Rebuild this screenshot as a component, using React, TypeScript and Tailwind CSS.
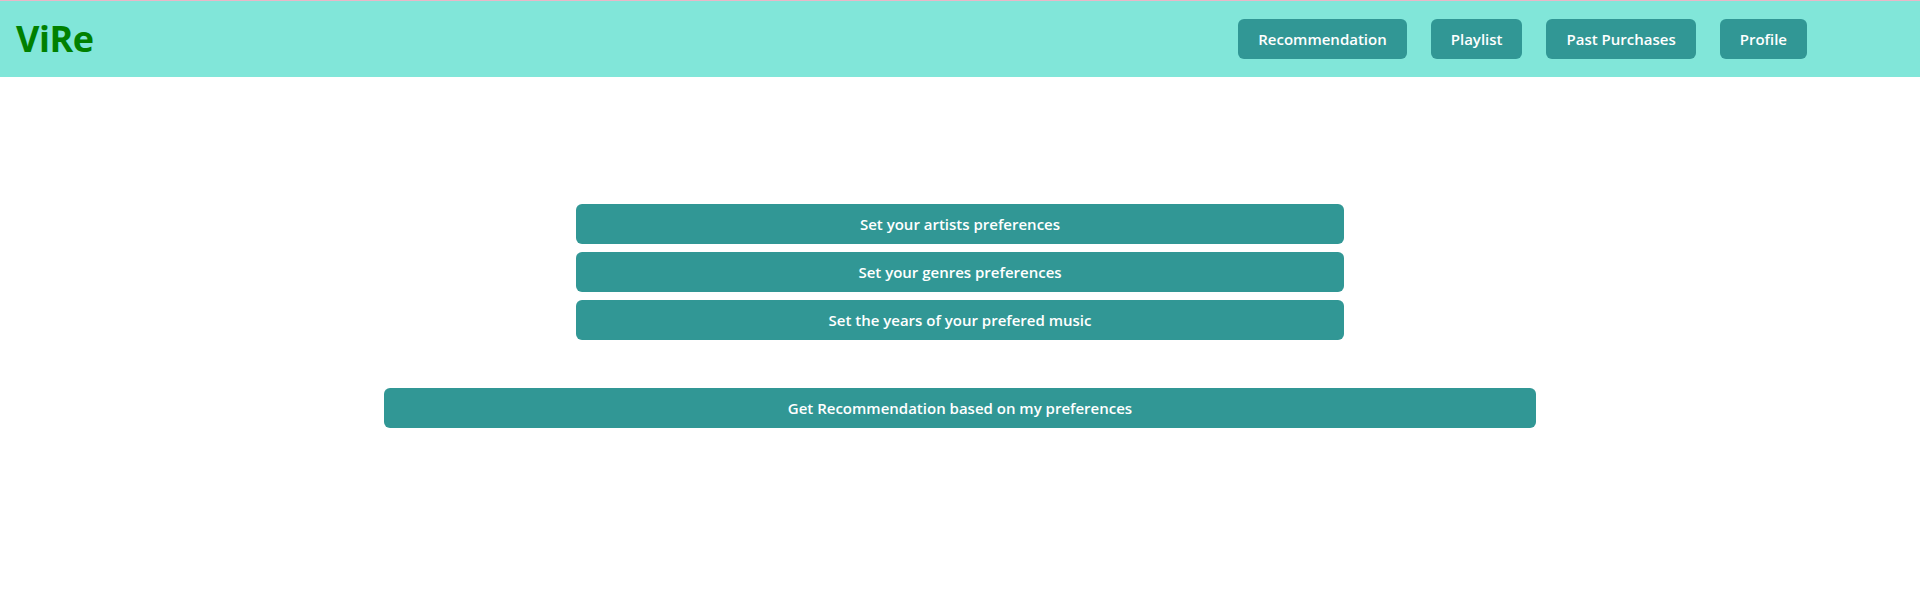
import React from 'react';

const NAV = ['Recommendation', 'Playlist', 'Past Purchases', 'Profile'];
const PREFS = [
  'Set your artists preferences',
  'Set your genres preferences',
  'Set the years of your prefered music',
];

export default function App() {
  return (
    <div className="min-h-[596px] bg-white font-['Open_Sans',sans-serif]">
      <div className="h-px bg-[#e9b8c8]" />
      {/* Header */}
      <header className="flex h-[76px] items-center justify-between bg-[#81e6d9] pl-4 pr-[113px]">
        <span className="text-[36px] font-bold leading-none tracking-[-0.5px] text-[#008000]">ViRe</span>
        <nav className="flex items-center gap-6">
          {NAV.map((label) => (
            <button
              key={label}
              className="h-10 rounded-md bg-[#319795] px-5 text-[15px] font-semibold text-white"
            >
              {label}
            </button>
          ))}
        </nav>
      </header>

      {/* Preferences */}
      <main className="flex flex-col items-center pt-[127px]">
        <div className="flex w-[768px] flex-col gap-2">
          {PREFS.map((label) => (
            <button
              key={label}
              className="h-10 w-full rounded-md bg-[#319795] text-[15px] font-semibold text-white"
            >
              {label}
            </button>
          ))}
        </div>
        <button className="mt-12 h-10 w-[1152px] rounded-md bg-[#319795] text-[15px] font-semibold text-white">
          Get Recommendation based on my preferences
        </button>
      </main>
    </div>
  );
}
